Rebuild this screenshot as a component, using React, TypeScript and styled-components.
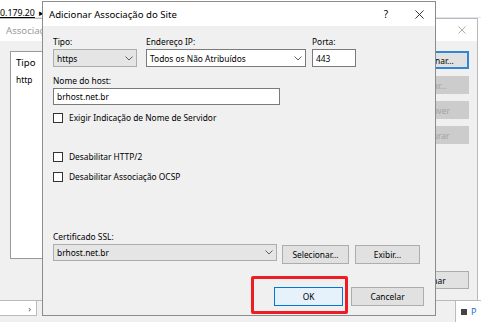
import styled, { createGlobalStyle } from "styled-components";

const GlobalStyle = createGlobalStyle`
  html, body {
    margin: 0;
    padding: 0;
  }
  body {
    width: 481px;
    height: 322px;
    overflow: hidden;
    background: #f0f0f0;
    font-family: "Noto Sans", "Open Sans", sans-serif;
  }
  * {
    box-sizing: border-box;
  }
`;

// main IIS window behind everything
const Desktop = styled.div`
  position: relative;
  width: 481px;
  height: 322px;
  overflow: hidden;
  background: #f0f0f0;
  font-size: 8.4px;
  color: #000;
  display: flex;
  flex-direction: column;
`;

const Breadcrumb = styled.div`
  height: 18px;
  background: #fff;
  display: flex;
  align-items: center;
  padding-top: 9px;
  font-size: 8.8px;
  border-bottom: 1px solid #dfe6ee;
  & span {
    text-decoration: underline;
  }
`;

const MainMiddle = styled.div`
  flex: 1;
  display: flex;
  justify-content: flex-end;
`;

const RightEdge = styled.div`
  width: 4px;
  background: #fff;
  border-left: 1px solid #9fb9d6;
`;

const MainBottom = styled.div`
  height: 22px;
  display: flex;
  justify-content: space-between;
  align-items: flex-start;
`;

const ScrollBox = styled.div`
  width: 37px;
  height: 16px;
  background: #fff;
  border: 1px solid #bbb;
  border-left: none;
  display: flex;
  align-items: center;
  justify-content: flex-end;
  padding-right: 5px;
  color: #555;
  font-size: 9px;
`;

const ActionsPane = styled.div`
  width: 26px;
  height: 22px;
  background: #fff;
  border-left: 1px solid #bbb;
  border-top: 1px solid #bbb;
  display: flex;
  align-items: center;
  gap: 4px;
  padding-left: 5px;
  color: #1e6fc7;
  font-size: 9px;
`;

const Square = styled.div`
  width: 6px;
  height: 6px;
  background: #444;
`;

// window frames (both dialogs float over the desktop)
const Window = styled.div<{ $left: number; $top: number; $w: number; $h: number }>`
  position: absolute;
  left: ${(p) => p.$left}px;
  top: ${(p) => p.$top}px;
  width: ${(p) => p.$w}px;
  height: ${(p) => p.$h}px;
  background: #f0f0f0;
  border: 1px solid ${(p) => (p.$left > 0 ? "#8c8c8c" : "#b9b9b9")};
  display: flex;
  flex-direction: column;
`;

const TitleBar = styled.div<{ $h: number; $inactive?: boolean }>`
  height: ${(p) => p.$h}px;
  flex: none;
  background: #fff;
  display: flex;
  align-items: center;
  padding-left: 6px;
  padding-right: 11px;
  font-size: 9.6px;
  color: ${(p) => (p.$inactive ? "#9a9a9a" : "#000")};
`;

const TitleText = styled.div`
  flex: 1;
`;

const TitleButtons = styled.div`
  display: flex;
  align-items: center;
  gap: 27px;
  & span {
    font-size: 10px;
  }
`;

// back dialog: Associações de Site
const BackBody = styled.div`
  flex: 1;
  display: flex;
  gap: 10px;
  padding: 10px 8px 11px 10px;
`;

const ListBox = styled.div`
  flex: 1;
  height: 208px;
  background: #fff;
  border: 1px solid #999;
  padding: 4px 5px;
  display: flex;
  flex-direction: column;
  gap: 5px;
  & b {
    font-weight: normal;
    font-size: 9.6px;
  }
`;

const ButtonColumn = styled.div`
  width: 73px;
  display: flex;
  flex-direction: column;
  gap: 7px;
`;

const SideButton = styled.div<{ $focus?: boolean; $disabled?: boolean }>`
  height: 18px;
  display: flex;
  align-items: center;
  justify-content: center;
  background: ${(p) => (p.$disabled ? "#cccccc" : "#e1e1e1")};
  border: ${(p) => (p.$focus ? "2px solid #2f86d6" : p.$disabled ? "1px solid #cccccc" : "1px solid #adadad")};
  color: ${(p) => (p.$disabled ? "#a3a3a3" : "#000")};
`;

const Spacer = styled.div`
  flex: 1;
`;

// front dialog: Adicionar Associação do Site
const Body = styled.div`
  flex: 1;
  display: flex;
  flex-direction: column;
  padding: 10px 10px 0 10px;
`;

const Row = styled.div<{ $mt?: number }>`
  display: flex;
  align-items: flex-start;
  margin-top: ${(p) => p.$mt ?? 0}px;
`;

const Field = styled.div<{ $w: number; $ml?: number }>`
  width: ${(p) => p.$w}px;
  margin-left: ${(p) => p.$ml ?? 0}px;
  display: flex;
  flex-direction: column;
  gap: 1px;
`;

const Label = styled.label`
  height: 12px;
  line-height: 12px;
`;

const TextBox = styled.div<{ $h?: number }>`
  height: ${(p) => p.$h ?? 17}px;
  background: #fff;
  border: 1px solid #7a7a7a;
  display: flex;
  align-items: center;
  padding-left: 3px;
`;

const Combo = styled.div<{ $editable?: boolean; $h?: number }>`
  height: ${(p) => p.$h ?? 18}px;
  background: ${(p) => (p.$editable ? "#fff" : "#e5e5e5")};
  border: 1px solid ${(p) => (p.$editable ? "#7a7a7a" : "#adadad")};
  display: flex;
  align-items: center;
  justify-content: space-between;
  padding: 0 3px 0 3px;
`;

const CheckRow = styled.div<{ $mt: number }>`
  display: flex;
  align-items: center;
  gap: 6px;
  height: 13px;
  margin-top: ${(p) => p.$mt}px;
`;

const CheckBox = styled.div`
  width: 10px;
  height: 10px;
  background: #fff;
  border: 1px solid #333;
`;

const Button = styled.div<{ $w: number; $ml?: number; $mt?: number; $default?: boolean }>`
  width: ${(p) => p.$w}px;
  height: 19px;
  margin-left: ${(p) => p.$ml ?? 0}px;
  margin-top: ${(p) => p.$mt ?? 0}px;
  background: ${(p) => (p.$default ? "#e5f1fb" : "#e1e1e1")};
  border: 1px solid ${(p) => (p.$default ? "#0078d7" : "#adadad")};
  display: flex;
  align-items: center;
  justify-content: center;
`;

const Footer = styled.div`
  display: flex;
  justify-content: flex-end;
  align-items: flex-start;
  margin-top: 12px;
  padding-right: 1px;
`;

const Highlight = styled.div`
  border: 3px solid #ee1c25;
  border-radius: 2px;
  padding: 8px 2px 5px 20px;
`;

const Chevron = () => (
  <svg width="8" height="5" viewBox="0 0 8 5">
    <polyline points="0.5,0.5 4,4 7.5,0.5" fill="none" stroke="#606060" strokeWidth="1" />
  </svg>
);

const CloseIcon = ({ size, color }: { size: number; color: string }) => (
  <svg width={size} height={size} viewBox="0 0 10 10">
    <path d="M0.5 0.5 L9.5 9.5 M9.5 0.5 L0.5 9.5" stroke={color} strokeWidth="1" />
  </svg>
);

export default function App() {
  return (
    <>
      <GlobalStyle />
      <Desktop>
        <Breadcrumb>
          <span>0.179.20</span>&nbsp;&nbsp;▸
        </Breadcrumb>
        <MainMiddle>
          <RightEdge />
        </MainMiddle>
        <MainBottom>
          <ScrollBox>›</ScrollBox>
          <ActionsPane>
            <Square />P
          </ActionsPane>
        </MainBottom>

        <Window $left={-1} $top={18} $w={479} $h={283}>
          <TitleBar $h={22} $inactive>
            <TitleText>Associações de Site</TitleText>
            <CloseIcon size={8} color="#9a9a9a" />
          </TitleBar>
          <BackBody>
            <ListBox>
              <b>Tipo</b>
              <span>http</span>
            </ListBox>
            <ButtonColumn>
              <SideButton $focus>Adicionar...</SideButton>
              <SideButton $disabled>Editar...</SideButton>
              <SideButton $disabled>Remover</SideButton>
              <SideButton $disabled>Procurar</SideButton>
              <Spacer />
              <SideButton>Fechar</SideButton>
            </ButtonColumn>
          </BackBody>
        </Window>

        <Window $left={42} $top={1} $w={394} $h={315}>
          <TitleBar $h={24}>
            <TitleText>Adicionar Associação do Site</TitleText>
            <TitleButtons>
              <span>?</span>
              <CloseIcon size={9} color="#222" />
            </TitleButtons>
          </TitleBar>
          <Body>
            <Row>
              <Field $w={84}>
                <Label>Tipo:</Label>
                <Combo>
                  https
                  <Chevron />
                </Combo>
              </Field>
              <Field $w={160} $ml={9}>
                <Label>Endereço IP:</Label>
                <Combo $editable>
                  Todos os Não Atribuídos
                  <Chevron />
                </Combo>
              </Field>
              <Field $w={44} $ml={6}>
                <Label>Porta:</Label>
                <TextBox $h={18}>443</TextBox>
              </Field>
            </Row>
            <Row $mt={8}>
              <Field $w={227}>
                <Label>Nome do host:</Label>
                <TextBox>brhost.net.br</TextBox>
              </Field>
            </Row>
            <CheckRow $mt={6}>
              <CheckBox />
              Exigir Indicação de Nome de Servidor
            </CheckRow>
            <CheckRow $mt={26}>
              <CheckBox />
              Desabilitar HTTP/2
            </CheckRow>
            <CheckRow $mt={7}>
              <CheckBox />
              Desabilitar Associação OCSP
            </CheckRow>
            <Row $mt={48}>
              <Field $w={224}>
                <Label>Certificado SSL:</Label>
                <Combo $h={17}>
                  brhost.net.br
                  <Chevron />
                </Combo>
              </Field>
              <Button $w={67} $ml={5} $mt={14}>
                Selecionar...
              </Button>
              <Button $w={65} $ml={6} $mt={14}>
                Exibir...
              </Button>
            </Row>
            <Footer>
              <Highlight>
                <Button $w={69} $default>
                  OK
                </Button>
              </Highlight>
              <Button $w={73} $ml={3} $mt={11}>
                Cancelar
              </Button>
            </Footer>
          </Body>
        </Window>
      </Desktop>
    </>
  );
}
